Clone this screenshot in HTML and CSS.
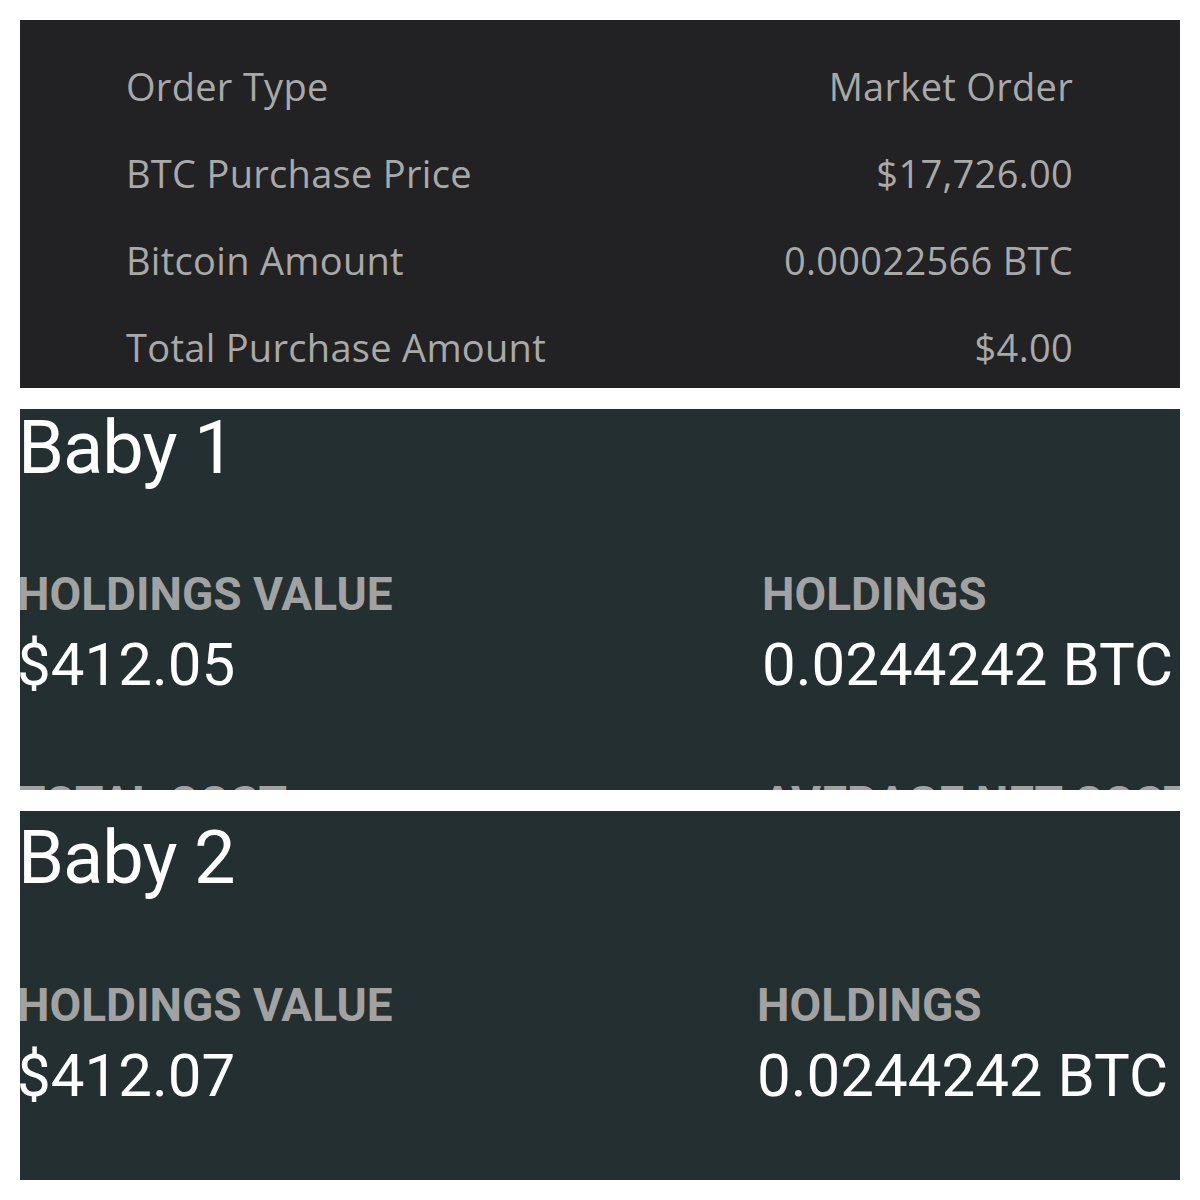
FILE: index.html
```html
<!DOCTYPE html>
<html lang="en">
<head>
    <meta charset="UTF-8">
    <meta name="viewport" content="width=device-width, initial-scale=1.0">
    <title>Bitcoin Purchases</title>
    <link rel="stylesheet" href="styles.css">
</head>
<body>

<div class="collage">
    <div class="panel order">
        <div class="order-row">
            <span>Order Type</span>
            <span>Market Order</span>
        </div>
        <div class="order-row">
            <span>BTC Purchase Price</span>
            <span>$17,726.00</span>
        </div>
        <div class="order-row">
            <span>Bitcoin Amount</span>
            <span>0.00022566 BTC</span>
        </div>
        <div class="order-row">
            <span>Total Purchase Amount</span>
            <span>$4.00</span>
        </div>
    </div>

    <div class="panel wallet">
        <h2 class="wallet-name">Baby 1</h2>
        <div class="stats">
            <div class="stat">
                <div class="stat-label">HOLDINGS VALUE</div>
                <div class="stat-value">$412.05</div>
            </div>
            <div class="stat">
                <div class="stat-label">HOLDINGS</div>
                <div class="stat-value">0.0244242 BTC</div>
            </div>
            <div class="stat">
                <div class="stat-label">TOTAL COST</div>
            </div>
            <div class="stat">
                <div class="stat-label">AVERAGE NET COST</div>
            </div>
        </div>
    </div>

    <div class="panel wallet wallet-second">
        <h2 class="wallet-name">Baby 2</h2>
        <div class="stats">
            <div class="stat">
                <div class="stat-label">HOLDINGS VALUE</div>
                <div class="stat-value">$412.07</div>
            </div>
            <div class="stat">
                <div class="stat-label">HOLDINGS</div>
                <div class="stat-value">0.0244242 BTC</div>
            </div>
        </div>
    </div>
</div>

</body>
</html>
```

FILE: styles.css
```css
body {
    margin: 0;
    background-color: #fff;
}

.collage {
    display: flex;
    flex-direction: column;
    gap: 21px;
    padding: 20px;
}

.panel {
    overflow: hidden;
}

/* purchase receipt */
.order {
    height: 368px;
    box-sizing: border-box;
    padding: 22px 107px 0 106px;
    background-color: #222224;
    font-family: "Open Sans", sans-serif;
    font-size: 38px;
    letter-spacing: 0.3px;
    color: #a9a9a9;
}

.order-row {
    display: flex;
    justify-content: space-between;
    align-items: center;
    height: 87px;
}

/* wallet cards */
.wallet {
    height: 381px;
    background-color: #242f31;
    font-family: Roboto, sans-serif;
    color: #fff;
}

.wallet-second {
    height: 369px;
}

.wallet-name {
    margin: 0 0 0 -2px;
    height: 78px;
    line-height: 78px;
    font-size: 74px;
    font-weight: 400;
    letter-spacing: -1px;
}

.wallet-second .wallet-name {
    height: 94px;
    line-height: 94px;
}

.stats {
    display: grid;
    grid-template-columns: 745px 1fr;
    row-gap: 81px;
    margin: 80px 0 0 -3px;
}

.wallet-second .stats {
    grid-template-columns: 740px 1fr;
    margin-top: 73px;
}

.stat-label {
    height: 54px;
    line-height: 54px;
    font-size: 46px;
    font-weight: 700;
    color: #a2a2a2;
    white-space: nowrap;
}

.stat-value {
    margin-top: 14px;
    height: 60px;
    line-height: 60px;
    font-size: 60px;
    white-space: nowrap;
}
```
